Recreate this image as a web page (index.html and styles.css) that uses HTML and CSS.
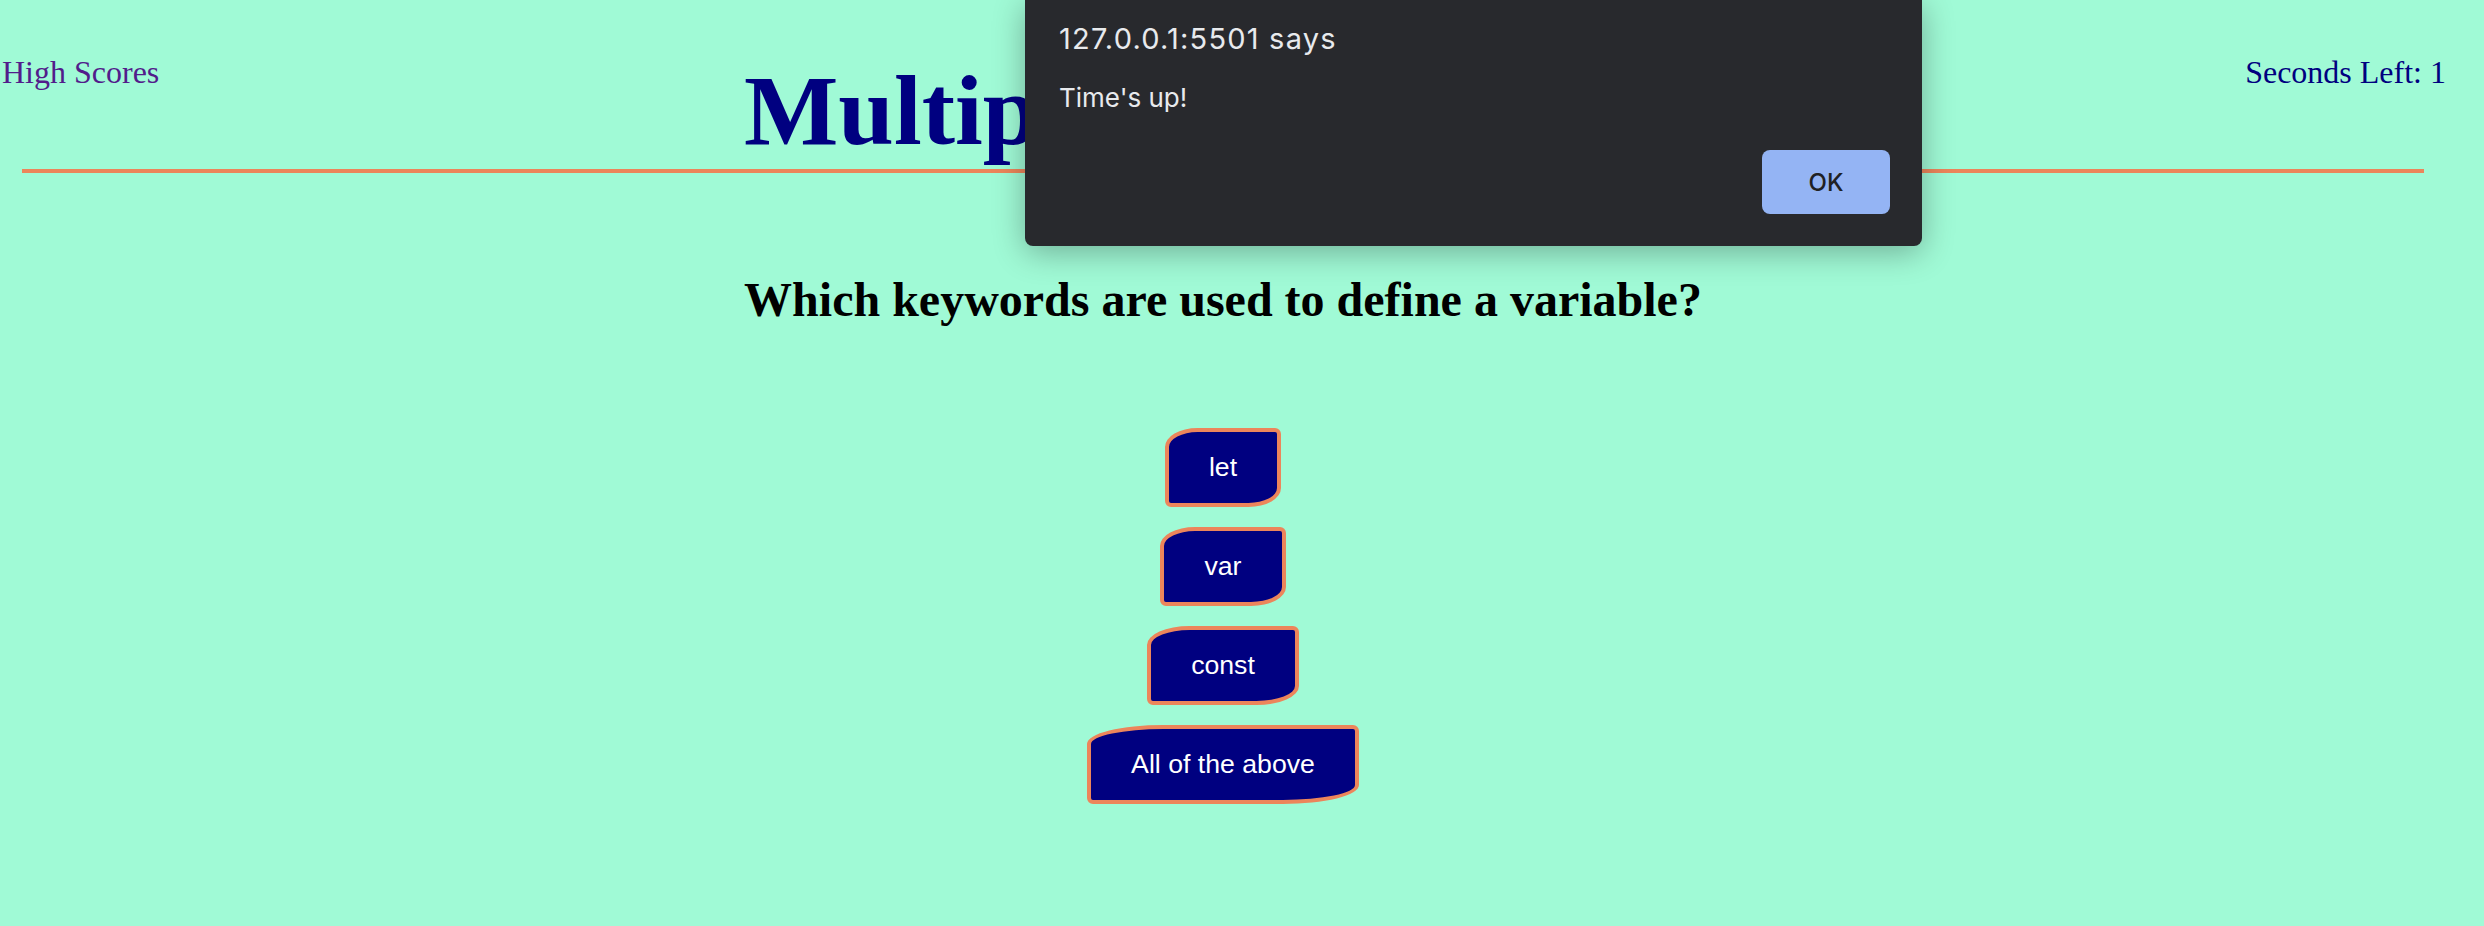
FILE: index.html
```html
<!DOCTYPE html>
<html lang="en">
<head>
<meta charset="utf-8">
<title>Multiple Choice Quiz</title>
<link rel="stylesheet" href="styles.css">
</head>
<body>
  <header class="topbar">
    <a class="scores-link" href="#">High Scores</a>
    <h1 class="title">Multiple Choice Quiz</h1>
    <div class="timer">Seconds Left: 1</div>
  </header>
  <main class="quiz">
    <div class="rule"></div>
    <h2 class="question">Which keywords are used to define a variable?</h2>
    <div class="answers">
      <button class="answer">let</button>
      <button class="answer">var</button>
      <button class="answer">const</button>
      <button class="answer">All of the above</button>
    </div>
  </main>
  <div class="alert" role="alertdialog">
    <div class="alert-title">127.0.0.1:5501 says</div>
    <div class="alert-message">Time's up!</div>
    <div class="alert-actions"><button class="alert-ok">OK</button></div>
  </div>
</body>
</html>
```

FILE: styles.css
```css
html, body {
  margin: 0;
  padding: 0;
}

body {
  background: #a0fad6;
  font-family: "Liberation Serif", "Times New Roman", serif;
  width: 2484px;
  height: 926px;
  overflow: hidden;
  position: relative;
}

.topbar {
  display: flex;
  justify-content: space-between;
  align-items: flex-start;
  padding: 53px 38px 0 2px;
}

.scores-link {
  font-size: 32px;
  color: #521c8b;
  text-decoration: none;
  margin-top: 1px;
}

.title {
  margin: 0;
  font-size: 100px;
  font-weight: bold;
  color: #000080;
}

.timer {
  font-size: 32px;
  color: #000080;
  margin-top: 1px;
}

.quiz {
  margin: 1px 60px 0 22px;
  display: flex;
  flex-direction: column;
  align-items: center;
}

.rule {
  align-self: stretch;
  height: 4px;
  background: #ec855b;
}

.question {
  margin: 99px 0 0;
  font-size: 48px;
  font-weight: bold;
  color: #000;
  text-align: center;
}

.answers {
  margin-top: 101px;
  display: flex;
  flex-direction: column;
  align-items: center;
  gap: 20px;
}

.answer {
  font-family: "Liberation Sans", Arial, sans-serif;
  font-size: 26.67px;
  color: #fff;
  background: #000080;
  border: 4px solid #ec855b;
  padding: 20px 40px;
  border-radius: 28% 6px 28% 6px / 24% 6px 24% 6px;
  cursor: pointer;
}

.alert {
  position: absolute;
  top: 0;
  left: 1025px;
  width: 897px;
  height: 246px;
  box-sizing: border-box;
  background: #28292d;
  border-radius: 0 0 8px 8px;
  box-shadow: 0 6px 32px rgba(0, 0, 0, 0.3);
  padding: 21px 32px 32px 34px;
  display: flex;
  flex-direction: column;
  font-family: Inter, "Noto Sans", sans-serif;
  color: #e8eaed;
}

.alert-title {
  font-size: 29px;
  line-height: 36px;
  letter-spacing: 1.2px;
}

.alert-message {
  margin-top: 24px;
  font-size: 26px;
  line-height: 34px;
}

.alert-actions {
  margin-top: 35px;
  display: flex;
  justify-content: flex-end;
}

.alert-ok {
  width: 128px;
  height: 64px;
  border: none;
  border-radius: 8px;
  background: #94b4f4;
  color: #202124;
  font-family: Inter, "Noto Sans", sans-serif;
  font-size: 24px;
  font-weight: 500;
  padding: 0;
}
```
